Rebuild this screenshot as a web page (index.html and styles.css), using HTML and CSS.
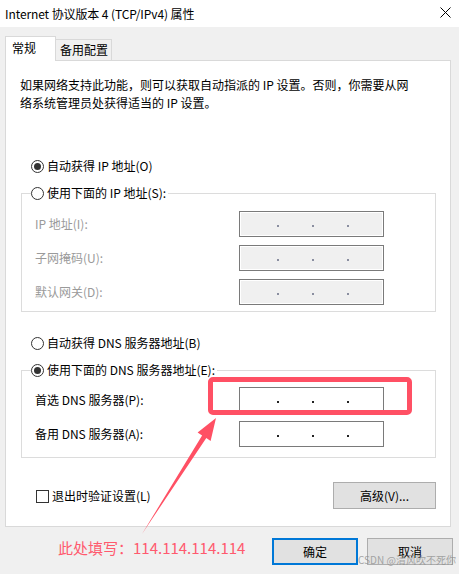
FILE: index.html
```html
<!DOCTYPE html>
<html lang="zh-CN">
<head>
<meta charset="utf-8">
<title>Internet 协议版本 4 (TCP/IPv4) 属性</title>
<link rel="stylesheet" href="styles.css">
</head>
<body>
<div class="window">
  <div class="titlebar">
    <span class="title">Internet 协议版本 4 (TCP/IPv4) 属性</span>
    <svg class="close" width="11" height="11" viewBox="0 0 11 11"><path d="M0.5 0.5L10.5 10.5M10.5 0.5L0.5 10.5" stroke="#000" stroke-width="1" fill="none"/></svg>
  </div>

  <div class="tabs">
    <div class="tab tab-active">常规</div>
    <div class="tab tab-inactive">备用配置</div>
  </div>

  <div class="panel">
    <p class="intro">如果网络支持此功能，则可以获取自动指派的 IP 设置。否则，你需要从网<br>络系统管理员处获得适当的 IP 设置。</p>

    <div class="radio-row radio-first"><span class="radio radio-checked"></span><span>自动获得 IP 地址(O)</span></div>

    <fieldset class="group group-ip">
      <legend class="legend"><span class="radio"></span><span>使用下面的 IP 地址(S):</span></legend>
      <div class="rows rows-ip">
        <div class="row row-disabled"><span class="label">IP 地址(I):</span><span class="field field-disabled"><i class="dot"></i><i class="dot"></i><i class="dot"></i></span></div>
        <div class="row row-disabled"><span class="label">子网掩码(U):</span><span class="field field-disabled"><i class="dot"></i><i class="dot"></i><i class="dot"></i></span></div>
        <div class="row row-disabled"><span class="label">默认网关(D):</span><span class="field field-disabled"><i class="dot"></i><i class="dot"></i><i class="dot"></i></span></div>
      </div>
    </fieldset>

    <div class="radio-row radio-dns"><span class="radio"></span><span>自动获得 DNS 服务器地址(B)</span></div>

    <fieldset class="group group-dns">
      <legend class="legend"><span class="radio radio-checked"></span><span>使用下面的 DNS 服务器地址(E):</span></legend>
      <div class="rows rows-dns">
        <div class="row"><span class="label">首选 DNS 服务器(P):</span><span class="field"><i class="dot"></i><i class="dot"></i><i class="dot"></i></span></div>
        <div class="row"><span class="label">备用 DNS 服务器(A):</span><span class="field"><i class="dot"></i><i class="dot"></i><i class="dot"></i></span></div>
      </div>
    </fieldset>

    <div class="check-row">
      <label class="check"><span class="checkbox"></span><span>退出时验证设置(L)</span></label>
      <button class="btn btn-adv">高级(V)...</button>
    </div>
  </div>

  <div class="footer">
    <span class="note">此处填写：114.114.114.114</span>
    <div class="actions">
      <button class="btn btn-ok">确定</button>
      <button class="btn btn-cancel">取消</button>
    </div>
  </div>

  <div class="highlight"></div>
  <svg class="arrow" width="459" height="574" viewBox="0 0 459 574">
    <polygon points="216,418 210.6,441 206.3,438 142,534 202.1,435.4 197.6,432.4" fill="#ff5064"/>
  </svg>
  <div class="watermark">CSDN @清风吹不死你</div>
</div>
</body>
</html>
```

FILE: styles.css
```css
* { box-sizing: border-box; }

html, body {
  margin: 0;
  padding: 0;
}

body {
  width: 459px;
  height: 574px;
  overflow: hidden;
  background: #f0f0f0;
  font-family: "Noto Sans CJK SC", "Noto Sans", sans-serif;
  font-size: 12px;
  color: #000;
}

.window {
  position: relative;
  width: 459px;
  height: 574px;
  background: #f0f0f0;
}

.titlebar {
  height: 27px;
  background: #fff;
  display: flex;
  align-items: center;
  justify-content: space-between;
  padding: 0 8px 0 5px;
}

.title {
  font-size: 12px;
  line-height: 16px;
  letter-spacing: -0.1px;
}

.close {
  display: block;
  margin-top: -2px;
}

/* tabs */
.tabs {
  display: flex;
  align-items: flex-start;
  height: 24px;
  margin-top: 9px;
  padding-left: 5px;
}

.tab {
  border: 1px solid #d9d9d9;
  border-bottom: none;
  white-space: nowrap;
}

.tab-active {
  position: relative;
  z-index: 1;
  width: 51px;
  height: 25px;
  background: #fff;
  line-height: 22px;
  padding-left: 6px;
}

.tab-inactive {
  width: 57px;
  height: 21px;
  margin-top: 3px;
  margin-left: -1px;
  background: #f0f0f0;
  line-height: 20px;
  padding-left: 4px;
}

/* panel */
.panel {
  margin: 0 8px 0 5px;
  background: #fff;
  border: 1px solid #d9d9d9;
  padding: 0 14px 17px 14px;
  display: flex;
  flex-direction: column;
}

.intro {
  margin: 15px 0 0 0;
  line-height: 18px;
  white-space: nowrap;
}

.radio-row,
.legend {
  display: flex;
  align-items: center;
  gap: 3px;
  height: 16px;
  line-height: 16px;
  white-space: nowrap;
}

.radio-row {
  padding-left: 11px;
}

.radio-first {
  margin-top: 46px;
}

.radio-dns {
  margin-top: 23px;
}

.radio {
  position: relative;
  display: inline-block;
  width: 13px;
  height: 13px;
  border: 1px solid #333;
  border-radius: 50%;
  background: #fff;
  flex: none;
}

.radio-checked::after {
  content: "";
  position: absolute;
  left: 2px;
  top: 2px;
  width: 7px;
  height: 7px;
  border-radius: 50%;
  background: #333;
}

.group {
  margin: 11px 0 0 1px;
  padding: 0;
  border: 1px solid #dcdcdc;
  min-width: 0;
}

.legend {
  margin-left: 9px;
  padding: 0 2px 0 0;
}

.rows {
  display: flex;
  flex-direction: column;
  gap: 8px;
  padding-left: 13px;
}

.rows-ip {
  padding-top: 10px;
  padding-bottom: 6px;
}

.rows-dns {
  padding-top: 9px;
  padding-bottom: 10px;
}

.row {
  display: flex;
  align-items: center;
  height: 26px;
}

.label {
  width: 204px;
  line-height: 16px;
  white-space: nowrap;
}

.row-disabled .label {
  color: #9a9a9a;
}

.field {
  display: flex;
  align-items: flex-start;
  gap: 33px;
  width: 145px;
  height: 26px;
  border: 1px solid #7a7a7a;
  background: #fff;
  padding: 13px 0 0 37px;
}

.field-disabled {
  background: #f0f0f0;
  box-shadow: inset 0 0 0 1px #fff;
}

.dot {
  display: block;
  width: 2px;
  height: 2px;
  background: #222;
}

.field-disabled .dot {
  background: #8a8ea0;
}

.check-row {
  display: flex;
  align-items: center;
  justify-content: space-between;
  margin-top: 24px;
  padding-left: 16px;
}

.check {
  display: flex;
  align-items: center;
  gap: 3px;
  line-height: 16px;
  margin-top: 1px;
}

.checkbox {
  display: inline-block;
  width: 13px;
  height: 13px;
  border: 1px solid #333;
  background: #fff;
}

.btn {
  font-family: "Noto Sans CJK SC", "Noto Sans", sans-serif;
  font-size: 12px;
  color: #000;
  height: 27px;
  background: #e1e1e1;
  border: 1px solid #adadad;
  padding: 0;
  margin: 0;
  line-height: 16px;
}

.btn-adv {
  width: 103px;
}

/* footer */
.footer {
  display: flex;
  align-items: flex-start;
  justify-content: space-between;
  margin-top: 11px;
  padding: 0 6px 0 58px;
}

.note {
  font-size: 15px;
  line-height: 20px;
  color: #ff5a6e;
  white-space: nowrap;
}

.actions {
  display: flex;
  gap: 9px;
}

.btn-ok,
.btn-cancel {
  width: 86px;
}

.btn-ok {
  border: 2px solid #0078d7;
}

/* annotations */
.highlight {
  position: absolute;
  left: 208px;
  top: 377px;
  width: 204px;
  height: 38px;
  border: 5px solid #ff5064;
  border-radius: 5px;
}

.arrow {
  position: absolute;
  left: 0;
  top: 0;
  pointer-events: none;
}

.watermark {
  position: absolute;
  left: 358px;
  top: 553px;
  font-size: 10px;
  line-height: 14px;
  color: rgba(140, 140, 140, 0.75);
  white-space: nowrap;
}
```
